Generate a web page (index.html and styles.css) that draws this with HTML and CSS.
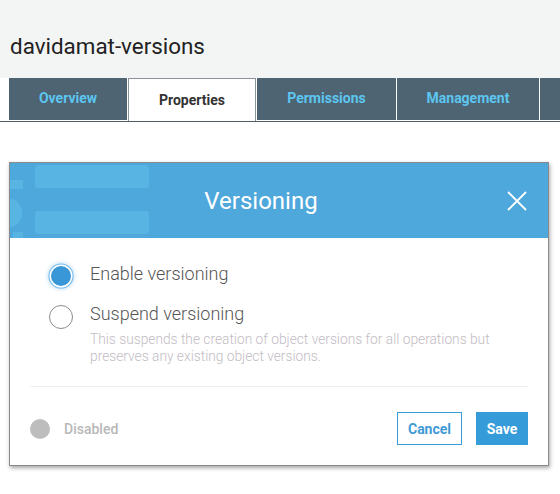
FILE: index.html
```html
<!DOCTYPE html>
<html>
<head>
<meta charset="utf-8">
<link rel="stylesheet" href="styles.css">
</head>
<body>
<div class="top">
  <h1 class="bucket-title">davidamat-versions</h1>
</div>
<nav class="tabs">
  <div class="tab tab-overview">Overview</div>
  <div class="tab tab-properties active">Properties</div>
  <div class="tab tab-permissions">Permissions</div>
  <div class="tab tab-management">Management</div>
  <div class="tab tab-more"></div>
</nav>
<main class="content">
  <section class="modal">
    <header class="modal-header">
      <div class="deco">
        <span class="deco-bar deco-bar1"></span>
        <span class="deco-bar deco-bar2"></span>
        <span class="deco-sq deco-sq1"></span>
        <span class="deco-half"></span>
        <span class="deco-sq deco-sq2"></span>
      </div>
      <h2 class="modal-title">Versioning</h2>
      <button class="close" aria-label="Close">
        <svg width="20" height="20" viewBox="0 0 20 20"><path d="M1 1 L19 19 M19 1 L1 19" stroke="#fff" stroke-width="1.8" fill="none"/></svg>
      </button>
    </header>
    <div class="modal-body">
      <div class="option">
        <span class="radio checked"></span>
        <div class="option-text">
          <div class="option-label">Enable versioning</div>
        </div>
      </div>
      <div class="option option-second">
        <span class="radio"></span>
        <div class="option-text">
          <div class="option-label">Suspend versioning</div>
          <p class="option-desc">This suspends the creation of object versions for all operations but preserves any existing object versions.</p>
        </div>
      </div>
    </div>
    <div class="divider"></div>
    <footer class="modal-footer">
      <div class="status">
        <span class="status-dot"></span>
        <span class="status-text">Disabled</span>
      </div>
      <div class="actions">
        <button class="btn btn-cancel">Cancel</button>
        <button class="btn btn-save">Save</button>
      </div>
    </footer>
  </section>
</main>
</body>
</html>
```
FILE: styles.css
```css
* { box-sizing: border-box; }
html, body { margin: 0; padding: 0; }
body {
  font-family: Roboto, "Liberation Sans", sans-serif;
  background: #fff;
  width: 560px;
  height: 494px;
  overflow: hidden;
}
.top {
  background: #f3f5f5;
  height: 78px;
  padding: 33px 0 0 10px;
}
.bucket-title {
  margin: 0;
  font-size: 22.4px;
  font-weight: 400;
  color: #222;
  line-height: 26px;
}
.tabs {
  display: flex;
  gap: 1px;
  padding: 0 0 1px 9px;
  border-bottom: 1px solid #4d5e69;
  height: 44px;
}
.tab {
  height: 42px;
  background: #4e6472;
  color: #5cc6f0;
  font-size: 14px;
  font-weight: 700;
  display: flex;
  align-items: center;
  justify-content: center;
  padding-bottom: 2px;
  flex: none;
}
.tab-overview { width: 118px; }
.tab-properties { width: 128px; }
.tab-permissions { width: 139px; }
.tab-management { width: 142px; }
.tab-more { flex: 1; }
.tab.active {
  background: #fff;
  color: #333;
  border: 1px solid #8a9499;
  border-bottom: none;
  height: 43px;
  padding-top: 1px;
}
.content {
  padding: 40px 0 0 9px;
}
.modal {
  width: 540px;
  border: 1px solid #8a8a8a;
  background: #fff;
  box-shadow: 1px 2px 4px rgba(0,0,0,0.35);
}
.modal-header {
  position: relative;
  height: 75px;
  background: #4fa8db;
  display: flex;
  align-items: center;
  padding-right: 21px;
  overflow: hidden;
}
.deco { position: absolute; inset: 0; }
.deco span { position: absolute; background: #58b4e3; }
.deco-bar { left: 25px; width: 114px; height: 23px; border-radius: 3px; }
.deco-bar1 { top: 2px; }
.deco-bar2 { top: 48px; }
.deco-sq1 { left: 0; top: 17px; width: 13px; height: 9px; }
.deco-half { left: -12px; top: 36px; width: 24px; height: 28px; border-radius: 50%; }
.deco-sq2 { left: 3px; top: 69px; width: 10px; height: 6px; }
.modal-title {
  position: relative;
  flex: 1;
  margin: 0;
  padding-left: 5px;
  text-align: center;
  color: #fff;
  font-size: 24px;
  font-weight: 400;
}
.close {
  position: relative;
  width: 20px;
  height: 20px;
  padding: 0;
  border: none;
  background: none;
  display: flex;
}
.modal-body {
  padding: 26px 20px 0 39px;
}
.option {
  display: flex;
  align-items: flex-start;
  gap: 17px;
}
.option-second { margin-top: 17px; }
.radio {
  flex: none;
  width: 24px;
  height: 24px;
  border-radius: 50%;
  border: 1px solid #8c8c8c;
  background: #fff;
}
.radio.checked {
  border: none;
  width: 20px;
  height: 20px;
  margin: 2px;
  background: #3a97d7;
  box-shadow: 0 0 0 1.5px #fff, 0 0 0 2.6px #78bcec, 0 0 4px 3px rgba(110,180,235,0.45);
}
.option-label {
  font-size: 18px;
  font-weight: 300;
  color: #555;
  line-height: 24px;
  margin-top: -2px;
}
.option-second .option-label { margin-top: -3px; }
.option-desc {
  margin: 5px 0 0;
  font-size: 13.75px;
  font-weight: 300;
  line-height: 17px;
  color: #c2bcc4;
  max-width: 420px;
}
.divider {
  margin: 21px 20px 0;
  height: 1px;
  background: #efefef;
}
.modal-footer {
  display: flex;
  justify-content: space-between;
  align-items: center;
  padding: 25px 20px 20px;
}
.status { display: flex; align-items: center; gap: 14px; }
.status-dot {
  width: 20px;
  height: 20px;
  border-radius: 50%;
  background: #bdbdbd;
}
.status-text {
  font-size: 14px;
  font-weight: 500;
  color: #b8b8b8;
}
.actions { display: flex; gap: 14px; }
.btn {
  font-family: Roboto, "Liberation Sans", sans-serif;
  font-size: 14px;
  font-weight: 700;
  height: 33px;
  border-radius: 0;
  cursor: pointer;
}
.btn-cancel {
  width: 65px;
  background: #fff;
  color: #3f9ad6;
  border: 1px solid #3a9bd9;
}
.btn-save {
  width: 52px;
  background: #369cd9;
  color: #fff;
  border: none;
}
```
